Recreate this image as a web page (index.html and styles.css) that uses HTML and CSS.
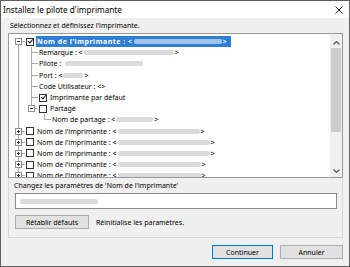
FILE: index.html
```html
<!DOCTYPE html>
<html lang="fr">
<head>
  <meta charset="UTF-8">
  <title>Installez le pilote d'imprimante</title>
  <link rel="stylesheet" href="styles.css">
</head>
<body>
  <div class="window">
    <div class="titlebar">
      <span class="title">Installez le pilote d'imprimante</span>
      <svg class="close" width="8" height="8" viewBox="0 0 8 8">
        <path d="M0.5 0.5L7.5 7.5M7.5 0.5L0.5 7.5" stroke="#1e1e1e" stroke-width="1" fill="none"/>
      </svg>
    </div>

    <div class="content">
      <p class="prompt">Sélectionnez et définissez l'imprimante.</p>

      <div class="tree">
        <div class="rows">
          <div class="row">
            <span class="g first"><span class="exp"></span></span>
            <span class="cb checked"></span>
            <span class="label selected">Nom de l'imprimante : &lt;<span class="blur" style="width:88px"></span>&gt;</span>
          </div>
          <div class="row">
            <span class="g v"></span><span class="g t"></span>
            <span class="label">Remarque : &lt;<span class="blur" style="width:90px"></span>&gt;</span>
          </div>
          <div class="row">
            <span class="g v"></span><span class="g t"></span>
            <span class="label">Pilote :<span class="blur gap" style="width:78px"></span></span>
          </div>
          <div class="row">
            <span class="g v"></span><span class="g t"></span>
            <span class="label">Port : &lt;<span class="blur" style="width:20px"></span>&gt;</span>
          </div>
          <div class="row">
            <span class="g v"></span><span class="g t"></span>
            <span class="label">Code Utilisateur : &lt;&gt;</span>
          </div>
          <div class="row">
            <span class="g v"></span><span class="g t"></span>
            <span class="cb checked"></span>
            <span class="label">Imprimante par défaut</span>
          </div>
          <div class="row">
            <span class="g v"></span><span class="g l"><span class="exp"></span></span>
            <span class="cb"></span>
            <span class="label">Partagé</span>
          </div>
          <div class="row">
            <span class="g v"></span><span class="g"></span><span class="g l"></span>
            <span class="label">Nom de partage : &lt;<span class="blur" style="width:37px"></span>&gt;</span>
          </div>
          <div class="row">
            <span class="g t"><span class="exp plus"></span></span>
            <span class="cb"></span>
            <span class="label">Nom de l'imprimante : &lt;<span class="blur" style="width:82px"></span>&gt;</span>
          </div>
          <div class="row">
            <span class="g t"><span class="exp plus"></span></span>
            <span class="cb"></span>
            <span class="label">Nom de l'imprimante : &lt;<span class="blur" style="width:92px"></span>&gt;</span>
          </div>
          <div class="row">
            <span class="g t"><span class="exp plus"></span></span>
            <span class="cb"></span>
            <span class="label">Nom de l'imprimante : &lt;<span class="blur" style="width:92px"></span>&gt;</span>
          </div>
          <div class="row">
            <span class="g t"><span class="exp plus"></span></span>
            <span class="cb"></span>
            <span class="label">Nom de l'imprimante : &lt;<span class="blur" style="width:83px"></span>&gt;</span>
          </div>
          <div class="row">
            <span class="g t"><span class="exp plus"></span></span>
            <span class="cb"></span>
            <span class="label">Nom de l'imprimante : &lt;<span class="blur" style="width:83px"></span>&gt;</span>
          </div>
        </div>

        <div class="scrollbar">
          <div class="sb-btn up">
            <svg width="7" height="4" viewBox="0 0 7 4"><polyline points="0.5,3.5 3.5,0.5 6.5,3.5" fill="none" stroke="#555" stroke-width="1.2"/></svg>
          </div>
          <div class="thumb"></div>
          <div class="sb-btn down">
            <svg width="7" height="4" viewBox="0 0 7 4"><polyline points="0.5,0.5 3.5,3.5 6.5,0.5" fill="none" stroke="#555" stroke-width="1.2"/></svg>
          </div>
        </div>
      </div>

      <div class="settings">
        <div class="settings-label">Changez les paramètres de 'Nom de l'imprimante'</div>
        <div class="field"><span class="blur" style="width:78px"></span></div>
        <div class="btn-row">
          <button class="btn reset">Rétablir défauts</button>
          <span class="hint">Réinitialise les paramètres.</span>
        </div>
      </div>

      <div class="footer">
        <button class="btn primary">Continuer</button>
        <button class="btn cancel">Annuler</button>
      </div>
    </div>
  </div>
</body>
</html>
```

FILE: styles.css
```css
* {
  box-sizing: border-box;
}
body {
  margin: 0;
  background: #fff;
  font-family: "Noto Sans", "Liberation Sans", sans-serif;
  font-size: 7px;
  color: #000;
}
.window {
  width: 350px;
  height: 267px;
  border: 1px solid #5f5f5f;
  background: #f0f0f0;
  display: flex;
  flex-direction: column;
}
.titlebar {
  height: 17px;
  flex: none;
  background: #fff;
  display: flex;
  align-items: center;
  justify-content: space-between;
  padding: 0 6px 0 2px;
  font-size: 8.2px;
}
.content {
  flex: 1;
  display: flex;
  flex-direction: column;
  padding: 0 6px 0 7px;
}
.prompt {
  margin: 0;
  height: 15px;
  line-height: 15px;
  padding-left: 2px;
}

/* tree view */
.tree {
  height: 145px;
  flex: none;
  border: 1px solid #9a9a9a;
  background: #fff;
  display: flex;
}
.rows {
  flex: 1;
  padding: 2px 0 0 3px;
  overflow: hidden;
}
.row {
  height: 11.2px;
  display: flex;
  align-items: center;
  white-space: nowrap;
}
.g {
  width: 13px;
  height: 100%;
  flex: none;
  display: flex;
  justify-content: center;
  align-items: flex-start;
}
.g.v {
  background: linear-gradient(#a8a8a8, #a8a8a8) 6px 0 / 1px 100% no-repeat;
}
.g.t {
  background:
    linear-gradient(#a8a8a8, #a8a8a8) 6px 0 / 1px 100% no-repeat,
    linear-gradient(#a8a8a8, #a8a8a8) 6px 5px / 7px 1px no-repeat;
}
.g.l {
  background:
    linear-gradient(#a8a8a8, #a8a8a8) 6px 0 / 1px 6px no-repeat,
    linear-gradient(#a8a8a8, #a8a8a8) 6px 5px / 7px 1px no-repeat;
}
.g.first {
  background:
    linear-gradient(#a8a8a8, #a8a8a8) 6px 5px / 1px 100% no-repeat,
    linear-gradient(#a8a8a8, #a8a8a8) 6px 5px / 7px 1px no-repeat;
}
.exp {
  width: 7px;
  height: 7px;
  margin-top: 2px;
  border: 1px solid #8e8f8f;
  background: #fff;
  position: relative;
}
.exp::before {
  content: "";
  position: absolute;
  left: 1px;
  top: 2px;
  width: 3px;
  height: 1px;
  background: #333;
}
.exp.plus::after {
  content: "";
  position: absolute;
  left: 2px;
  top: 1px;
  width: 1px;
  height: 3px;
  background: #333;
}
.cb {
  width: 8px;
  height: 8px;
  flex: none;
  margin-left: 1px;
  border: 1px solid #333;
  background: #fff;
  position: relative;
}
.cb.checked::after {
  content: "";
  position: absolute;
  left: 1.5px;
  top: -0.5px;
  width: 2px;
  height: 4px;
  border-right: 1.5px solid #111;
  border-bottom: 1.5px solid #111;
  transform: rotate(40deg);
}
.label {
  height: 11px;
  display: inline-flex;
  align-items: center;
  padding: 0 1px;
}
.cb + .label {
  margin-left: 2px;
}
.label.selected {
  background: #2f7ed6;
  color: #fff;
  font-weight: bold;
  letter-spacing: 0.5px;
  padding-right: 4px;
}
.blur {
  display: inline-block;
  height: 5px;
  margin: 0 1px;
  border-radius: 2px;
  background: #dadada;
  filter: blur(0.5px);
}
.blur.gap {
  margin-left: 4px;
}
.selected .blur {
  background: #a3c4ea;
}

/* scrollbar */
.scrollbar {
  width: 12px;
  flex: none;
  background: #f0f0f0;
  display: flex;
  flex-direction: column;
}
.sb-btn {
  height: 14px;
  display: flex;
  justify-content: center;
  align-items: flex-start;
}
.sb-btn.up {
  padding-top: 7px;
}
.sb-btn.down {
  margin-top: auto;
  padding-top: 6px;
}
.thumb {
  height: 84px;
  margin: 0 1px;
  background: #cdcdcd;
}

/* settings group */
.settings {
  height: 60px;
  flex: none;
  border: 1px solid #d9d9d9;
  border-top: none;
  padding: 3px 5px 0 5px;
  display: flex;
  flex-direction: column;
}
.settings-label {
  height: 10px;
  line-height: 10px;
}
.field {
  height: 16px;
  margin: 2px 0 0 1px;
  border: 1px solid #8a8a8a;
  background: #fff;
  display: flex;
  align-items: center;
  padding-left: 3px;
}
.btn-row {
  margin: 6px 0 0 1px;
  display: flex;
  align-items: center;
}
.btn {
  height: 14px;
  padding: 0;
  border: 1px solid #adadad;
  background: #e1e1e1;
  font-family: inherit;
  font-size: 7px;
  color: #000;
}
.reset {
  width: 74px;
}
.hint {
  margin-left: 7px;
}

/* dialog buttons */
.footer {
  display: flex;
  justify-content: flex-end;
  gap: 7px;
  padding-top: 7px;
}
.primary {
  width: 61px;
  border-color: #0078d7;
}
.cancel {
  width: 63px;
}
```
